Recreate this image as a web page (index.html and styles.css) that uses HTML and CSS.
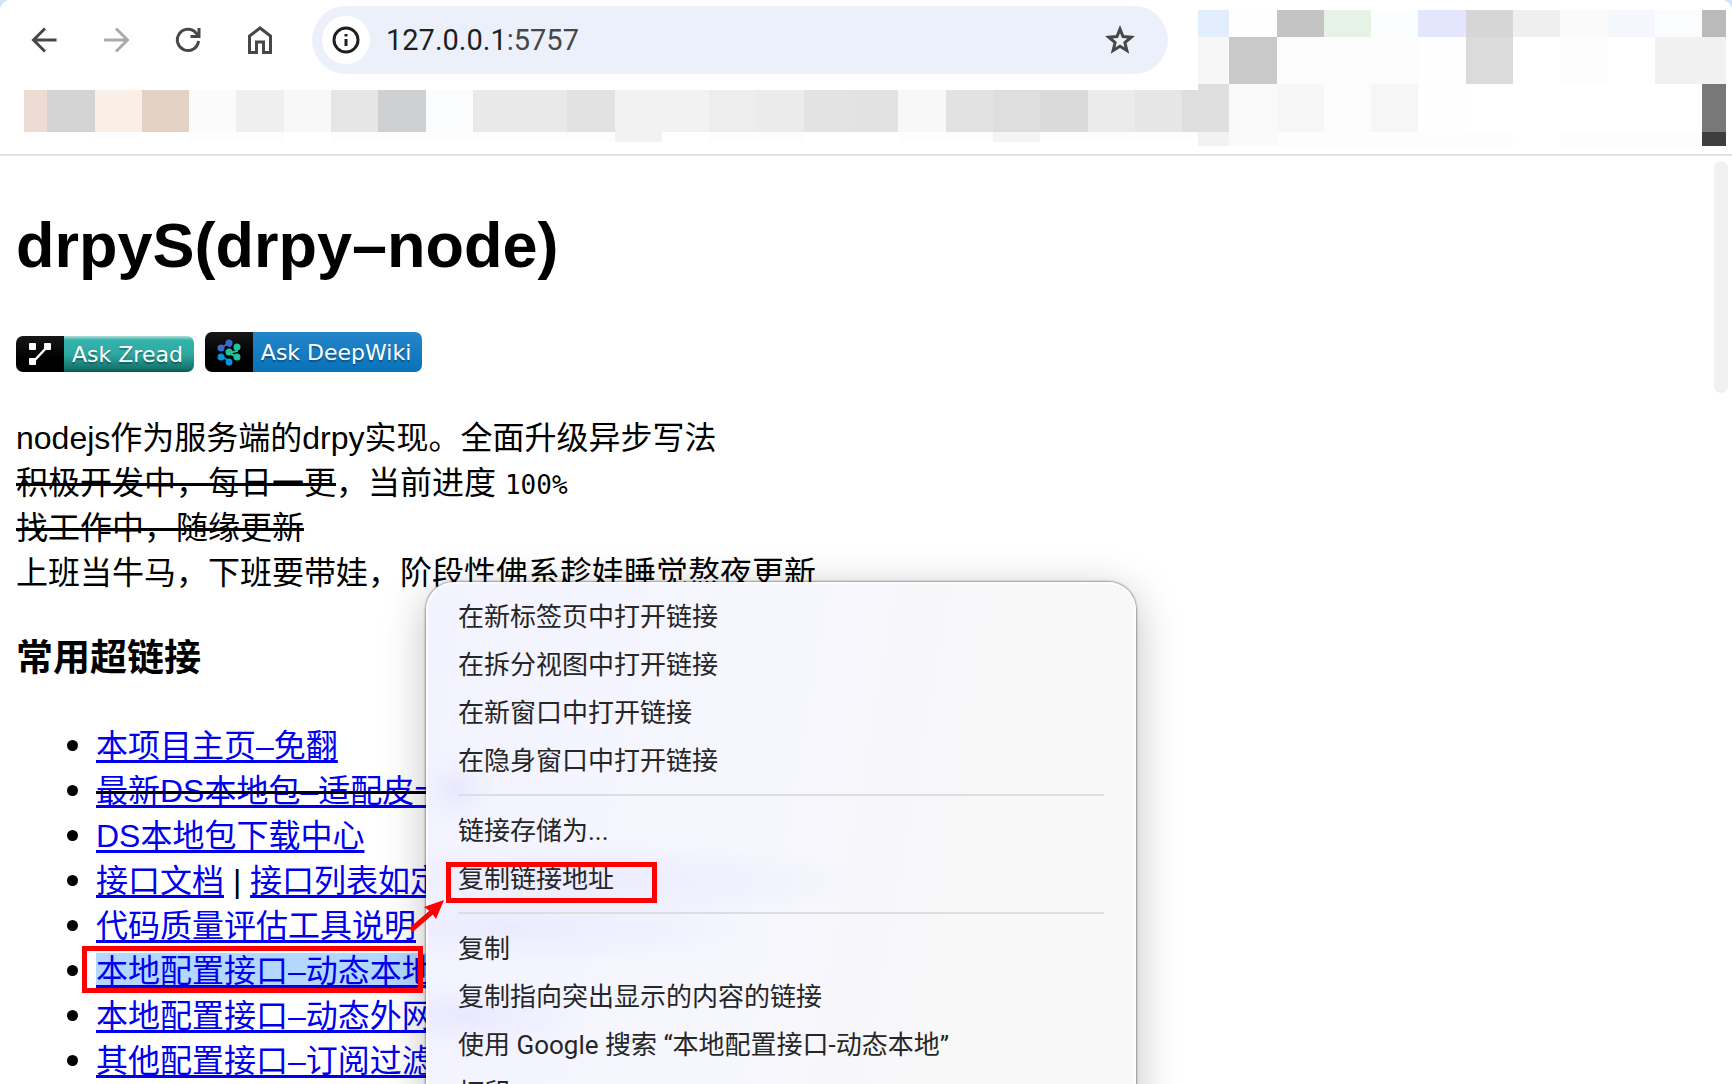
FILE: index.html
```html
<!DOCTYPE html>
<html lang="zh-CN">
<head>
    <meta charset="UTF-8">
    <meta name="viewport" content="width=device-width, initial-scale=1.0">
    <title>drpyS(drpy-node)</title>
    <link rel="stylesheet" href="styles.css">
</head>
<body>

<!-- Browser toolbar -->
<header class="chrome">
    <div class="chrome-main">
        <div class="toolbar">
            <nav class="nav">
                <button class="nav-btn" aria-label="返回">
                    <svg width="32" height="32" viewBox="0 0 32 32"><path d="M28.500 16H6M17 4.500L5.500 16L17 27.500"/></svg>
                </button>
                <button class="nav-btn off" aria-label="前进">
                    <svg width="32" height="32" viewBox="0 0 32 32"><path d="M4 16h23M16 4.500L27.500 16L16 27.500"/></svg>
                </button>
                <button class="nav-btn" aria-label="刷新">
                    <svg width="32" height="32" viewBox="0 0 32 32"><path d="M26.500 17A10.600 10.600 0 1 1 24 9l3 3M27 4v8.500h-8.500"/></svg>
                </button>
                <button class="nav-btn" aria-label="主页">
                    <svg width="32" height="32" viewBox="0 0 32 32"><path d="M5.500 28.500V12L16 4l10.500 8v16.500h-7V18h-7v10.500z"/></svg>
                </button>
            </nav>
            <div class="omnibox">
                <button class="info" aria-label="网站信息">
                    <svg width="28" height="28" viewBox="0 0 28 28"><circle cx="14" cy="14" r="12"/><path d="M14 13v7M14 8v2.500"/></svg>
                </button>
                <div class="url">127.0.0.1<span>:5757</span></div>
                <button class="star" aria-label="收藏">
                    <svg width="32" height="32" viewBox="0 0 32 32"><path d="M16 5l3 7.600 8.200.600-6.300 5.300 2 8L16 22.200 9.100 26.500l2-8L4.800 13.200l8.200-.600z"/></svg>
                </button>
            </div>
        </div>
        <svg class="bookmarks" viewBox="24 90 1174 52" preserveAspectRatio="none" shape-rendering="crispEdges">
            <rect x="24" y="90" width="23" height="42" fill="#eddcd3"/>
            <rect x="47" y="90" width="48" height="42" fill="#d4d4d4"/>
            <rect x="95" y="90" width="47" height="42" fill="#faefe6"/>
            <rect x="142" y="90" width="47" height="42" fill="#e4d2c4"/>
            <rect x="189" y="90" width="47" height="42" fill="#fbfbfb"/>
            <rect x="236" y="90" width="48" height="42" fill="#efefef"/>
            <rect x="284" y="90" width="47" height="42" fill="#f8f8f8"/>
            <rect x="331" y="90" width="47" height="42" fill="#e6e6e6"/>
            <rect x="378" y="90" width="48" height="42" fill="#cfd0d1"/>
            <rect x="426" y="90" width="47" height="42" fill="#fbfcfe"/>
            <rect x="473" y="90" width="94" height="42" fill="#e9e9e9"/>
            <rect x="567" y="90" width="48" height="42" fill="#e2e2e2"/>
            <rect x="615" y="90" width="47" height="52" fill="#f2f2f2"/>
            <rect x="662" y="90" width="47" height="42" fill="#f2f2f2"/>
            <rect x="709" y="90" width="48" height="42" fill="#ededed"/>
            <rect x="757" y="90" width="47" height="42" fill="#ebebeb"/>
            <rect x="804" y="90" width="47" height="42" fill="#e3e3e3"/>
            <rect x="851" y="90" width="47" height="42" fill="#e2e2e2"/>
            <rect x="898" y="90" width="48" height="42" fill="#f8f8f8"/>
            <rect x="946" y="90" width="47" height="42" fill="#e2e2e2"/>
            <rect x="993" y="90" width="47" height="42" fill="#dedede"/>
            <rect x="1040" y="90" width="48" height="42" fill="#dadada"/>
            <rect x="1088" y="90" width="47" height="42" fill="#ebebeb"/>
            <rect x="1135" y="90" width="47" height="42" fill="#e6e6e6"/>
            <rect x="1182" y="90" width="16" height="42" fill="#dedede"/>
            <rect x="95" y="132" width="47" height="10" fill="#fdfdfd"/>
            <rect x="189" y="132" width="95" height="10" fill="#fdfdfd"/>
            <rect x="331" y="132" width="284" height="10" fill="#fdfdfd"/>
            <rect x="709" y="132" width="95" height="10" fill="#fdfdfd"/>
            <rect x="898" y="132" width="95" height="10" fill="#fdfdfd"/>
            <rect x="993" y="132" width="47" height="10" fill="#f4f4f4"/>
            <rect x="1040" y="132" width="158" height="10" fill="#fdfdfd"/>
        </svg>
    </div>
    <svg class="extensions" width="528" height="136" viewBox="1198 10 528 136" shape-rendering="crispEdges">
        <rect x="1198" y="10" width="31" height="27" fill="#e3eefd"/>
        <rect x="1229" y="10" width="48" height="27" fill="#fefefe"/>
        <rect x="1277" y="10" width="47" height="27" fill="#c4c4c4"/>
        <rect x="1324" y="10" width="47" height="27" fill="#e7f2e6"/>
        <rect x="1371" y="10" width="47" height="27" fill="#fafeff"/>
        <rect x="1418" y="10" width="48" height="27" fill="#e4e6fe"/>
        <rect x="1466" y="10" width="47" height="27" fill="#d6d6d6"/>
        <rect x="1513" y="10" width="47" height="27" fill="#efefef"/>
        <rect x="1560" y="10" width="48" height="27" fill="#fafafa"/>
        <rect x="1608" y="10" width="47" height="27" fill="#f4f8fe"/>
        <rect x="1655" y="10" width="47" height="27" fill="#fafcff"/>
        <rect x="1702" y="10" width="24" height="27" fill="#bababa"/>
        <rect x="1198" y="37" width="31" height="47" fill="#f7f7f7"/>
        <rect x="1229" y="37" width="48" height="47" fill="#c9c9c9"/>
        <rect x="1277" y="37" width="141" height="47" fill="#fcfcfc"/>
        <rect x="1418" y="37" width="48" height="47" fill="#fefefe"/>
        <rect x="1466" y="37" width="47" height="47" fill="#dbdbdb"/>
        <rect x="1560" y="37" width="48" height="47" fill="#fcfcfc"/>
        <rect x="1655" y="37" width="71" height="47" fill="#f1f1f1"/>
        <rect x="1198" y="84" width="31" height="48" fill="#dfdfdf"/>
        <rect x="1229" y="84" width="48" height="48" fill="#f9f9f9"/>
        <rect x="1277" y="84" width="47" height="48" fill="#f6f6f6"/>
        <rect x="1324" y="84" width="47" height="48" fill="#fcfcfc"/>
        <rect x="1371" y="84" width="47" height="48" fill="#f6f6f6"/>
        <rect x="1418" y="84" width="48" height="48" fill="#fefefe"/>
        <rect x="1702" y="84" width="24" height="48" fill="#787878"/>
        <rect x="1198" y="132" width="31" height="14" fill="#f2f2f2"/>
        <rect x="1229" y="132" width="48" height="14" fill="#fafafa"/>
        <rect x="1277" y="132" width="236" height="14" fill="#fdfdfd"/>
        <rect x="1560" y="132" width="142" height="14" fill="#fdfdfd"/>
        <rect x="1702" y="132" width="24" height="14" fill="#3e3e3e"/>
    </svg>
</header>

<main class="page">
    <h1>drpyS(drpy–node)</h1>

    <div class="badges">
        <a class="badge zread" href="#">
            <span class="badge-icon">
                <svg width="28" height="28" viewBox="0 0 28 28"><path d="M7 22L22 6" stroke="#fff" stroke-width="2.500"/><rect x="3" y="3" width="7" height="7" rx="1" fill="#fff"/><rect x="18" y="3" width="7" height="7" rx="1" fill="#fff"/><rect x="3" y="18" width="7" height="7" rx="1" fill="#fff"/></svg>
            </span>
            <span class="badge-text">Ask Zread</span>
        </a>
        <a class="badge deepwiki" href="#">
            <span class="badge-icon">
                <svg width="28" height="28" viewBox="0 0 28 28">
                    <g stroke-width="2" fill="none"><path d="M6 10l8-5 1 4" stroke="#3a69cc"/><path d="M22 10v3l-8 2 8 4" stroke="#21c19a"/><path d="M6 18l8 5" stroke="#0294de"/></g>
                    <g fill="#3a69cc"><circle cx="14" cy="5" r="3.500"/><circle cx="6" cy="10" r="3.500"/></g>
                    <g fill="#21c19a"><circle cx="22" cy="9" r="3.500"/><circle cx="14" cy="14" r="3.500"/><circle cx="22" cy="19" r="3.500"/></g>
                    <g fill="#0294de"><circle cx="6" cy="19" r="3.500"/><circle cx="14" cy="24" r="3.500"/></g>
                </svg>
            </span>
            <span class="badge-text">Ask DeepWiki</span>
        </a>
    </div>

    <p>nodejs作为服务端的drpy实现。全面升级异步写法<br>
        <del>积极开发中，每日一更</del>，当前进度 <code>100%</code><br>
        <del>找工作中，随缘更新</del><br>
        上班当牛马，下班要带娃，阶段性佛系趁娃睡觉熬夜更新</p>

    <h3>常用超链接</h3>
    <ul>
        <li><a href="#">本项目主页–免翻</a></li>
        <li><del><a href="#">最新DS本地包–适配皮卡</a></del></li>
        <li><a href="#">DS本地包下载中心</a></li>
        <li><a href="#">接口文档</a> | <a href="#">接口列表如定</a></li>
        <li><a href="#">代码质量评估工具说明</a></li>
        <li><a class="selected" href="#">本地配置接口–动态本地</a></li>
        <li><a href="#">本地配置接口–动态外网</a></li>
        <li><a href="#">其他配置接口–订阅过滤</a></li>
    </ul>
    <div class="scrollbar"></div>
</main>

<!-- Right click menu -->
<div class="menu" role="menu">
    <button role="menuitem">在新标签页中打开链接</button>
    <button role="menuitem">在拆分视图中打开链接</button>
    <button role="menuitem">在新窗口中打开链接</button>
    <button role="menuitem">在隐身窗口中打开链接</button>
    <hr>
    <button role="menuitem">链接存储为...</button>
    <button role="menuitem">复制链接地址</button>
    <hr>
    <button role="menuitem">复制</button>
    <button role="menuitem">复制指向突出显示的内容的链接</button>
    <button role="menuitem">使用 Google 搜索 “本地配置接口-动态本地”</button>
    <button role="menuitem">打印</button>
</div>

<!-- Red marks over the page -->
<div class="mark mark-link"></div>
<div class="mark mark-copy"></div>
<svg class="arrow" width="36" height="36" viewBox="0 0 36 36"><path d="M2 31L24 12" stroke="#f00" stroke-width="5"/><path d="M35 1L15 8l7 5 5 7z" fill="#f00"/></svg>

</body>
</html>
```
FILE: styles.css
```css
body {
    margin: 0;
    height: 100vh;
    overflow: hidden;
    position: relative;
    display: flex;
    flex-direction: column;
    background: #fff;
    color: #000;
    font-family: "Liberation Sans", "Noto Sans CJK SC", sans-serif;
    font-size: 32px;
    line-height: 45px;
}

button {
    border: 0;
    padding: 0;
    background: none;
    font: inherit;
    color: inherit;
}

/* toolbar */
.chrome {
    display: flex;
    flex-shrink: 0;
    height: 154px;
    border-bottom: 2px solid #e2e2e2;
    background:
        radial-gradient(circle at 12px 12px, #fff 12px, #d3e3fd 13px) 0 0 / 12px 12px no-repeat,
        radial-gradient(circle at 0 12px, #fff 12px, #d3e3fd 13px) 100% 0 / 12px 12px no-repeat,
        #fff;
}

.chrome-main {
    flex: 1;
    display: flex;
    flex-direction: column;
    gap: 16px;
    padding-top: 6px;
}

.toolbar {
    display: flex;
    height: 68px;
    padding: 0 30px 0 28px;
}

.nav {
    display: flex;
    align-items: center;
    gap: 40px;
    margin-right: 36px;
}

.nav-btn,
.info,
.star {
    display: flex;
    align-items: center;
    justify-content: center;
}

.nav-btn svg,
.star svg,
.info svg {
    fill: none;
    stroke: #474747;
    stroke-width: 3;
}

.nav-btn.off svg {
    stroke: #ababab;
}

.omnibox {
    flex: 1;
    display: flex;
    align-items: center;
    padding: 0 32px 0 10px;
    border-radius: 34px;
    background: #ecf0fa;
}

.info {
    width: 48px;
    height: 48px;
    border-radius: 50%;
    background: #fff;
}

.info svg {
    stroke: #1f1f1f;
}

.url {
    flex: 1;
    margin-left: 16px;
    font-family: Roboto, sans-serif;
    font-size: 29px;
    color: #1f1f1f;
}

.url span {
    color: #474747;
}

.bookmarks {
    display: block;
    width: calc(100% - 24px);
    height: 52px;
    margin-left: 24px;
}

.extensions {
    flex-shrink: 0;
    margin: 10px 6px 0 0;
}

/* page */
.page {
    flex: 1;
    min-height: 0;
    overflow: hidden;
    position: relative;
    padding: 0 16px;
}

h1 {
    margin: 44px 0 42px;
    font-size: 63px;
    line-height: 90px;
}

.badges {
    display: flex;
    align-items: flex-end;
    gap: 11px;
}

.badge {
    display: flex;
    height: 36px;
    border-radius: 7px;
    overflow: hidden;
    color: #fff;
    font-family: "DejaVu Sans", sans-serif;
    font-size: 22px;
    line-height: 37px;
    text-decoration: none;
    text-shadow: 0 2px 1px rgba(1, 1, 1, 0.3);
}

.badge-icon {
    display: flex;
    align-items: center;
    justify-content: center;
    width: 48px;
    background: linear-gradient(#171717, #000 60%);
}

.badge-text {
    padding: 0 11px 0 8px;
}

.zread .badge-text {
    background: linear-gradient(#b5dedb, #32b3ac 4px, #2fa9a2 50%, #15756f 90%, #0b524e);
}

.deepwiki {
    height: 40px;
    line-height: 41px;
}

.deepwiki .badge-text {
    background: linear-gradient(#2585c9, #0872b8);
}

p {
    margin: 44px 0 37px;
}

del {
    text-decoration-thickness: 3px;
}

code {
    font-family: "DejaVu Sans Mono", monospace;
    font-size: 26px;
    line-height: 1;
}

h3 {
    margin: 0 0 39px;
    font-size: 37px;
    line-height: 52px;
}

ul {
    margin: 0;
    padding-left: 80px;
    list-style: none;
}

li {
    white-space: nowrap;
}

li::before {
    content: "";
    display: inline-block;
    width: 11px;
    height: 11px;
    margin: 0 18px 0 -29px;
    border-radius: 50%;
    background: #000;
    vertical-align: 6px;
}

a {
    color: #0000ee;
    text-decoration-thickness: 3px;
    text-underline-offset: 3px;
    text-decoration-skip-ink: none;
}

.selected {
    background: #b3d7ff;
}

.scrollbar {
    position: absolute;
    top: 5px;
    right: 4px;
    width: 14px;
    height: 232px;
    border-radius: 7px;
    background: #f1f1f1;
}

/* context menu */
.menu {
    position: absolute;
    left: 426px;
    top: 582px;
    width: 710px;
    box-sizing: border-box;
    padding: 11px 32px;
    border-radius: 28px;
    background:
        radial-gradient(40px 34px at 30px 208px, #e9e9fe, transparent),
        radial-gradient(300px 40px at 150px 300px, #ebebfe, transparent),
        radial-gradient(260px 36px at 80px 346px, #ebebfe, transparent),
        radial-gradient(120px 36px at 40px 434px, #e9e9fe, transparent),
        linear-gradient(100deg, #f3f3ff, #f6f6fe 45%, #f8f8f8 75%);
    box-shadow: inset 0 0 0 2px rgba(255, 255, 255, 0.7), 0 0 2px 1px rgba(0, 0, 0, 0.35), 0 10px 44px rgba(0, 0, 0, 0.25);
}

.menu button {
    display: block;
    width: 100%;
    font-family: Roboto, "Noto Sans CJK SC", sans-serif;
    font-size: 26px;
    line-height: 48px;
    text-align: left;
    white-space: nowrap;
    color: #262626;
}

.menu hr {
    height: 2px;
    margin: 9px 0 11px;
    border: 0;
    background: #dedee0;
}

/* red marks */
.mark {
    position: absolute;
    box-sizing: border-box;
    border: 5px solid #f00;
}

.mark-link {
    left: 82px;
    top: 946px;
    width: 341px;
    height: 47px;
}

.mark-copy {
    left: 446px;
    top: 862px;
    width: 211px;
    height: 41px;
}

.arrow {
    position: absolute;
    left: 409px;
    top: 899px;
}
```
